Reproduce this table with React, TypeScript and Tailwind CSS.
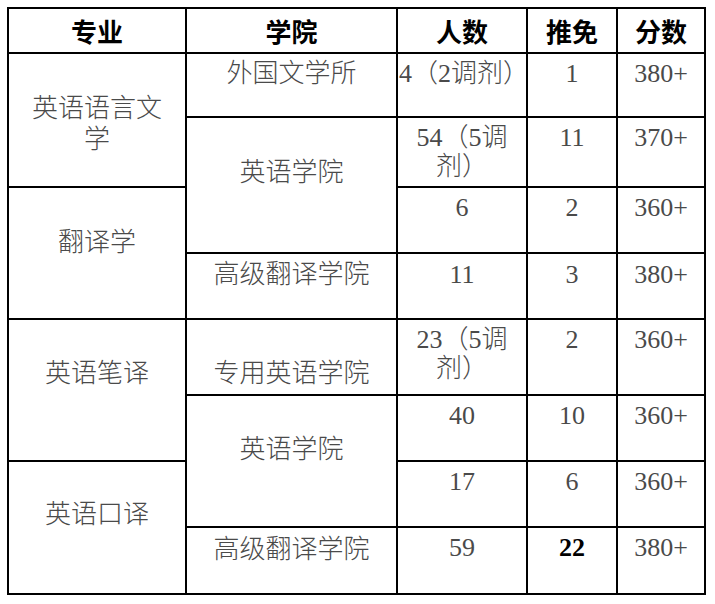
import { ReactNode } from 'react'

function Cell({ children, className = '' }: { children: ReactNode; className?: string }) {
  return (
    <div className={`bg-white flex justify-center text-center leading-[29px] ${className}`}>
      <div>{children}</div>
    </div>
  )
}

function Head({ children }: { children: ReactNode }) {
  return (
    <div className="bg-white flex items-center justify-center font-['Noto_Sans_CJK_SC',sans-serif] font-bold text-[26px] text-black">
      {children}
    </div>
  )
}

export default function App() {
  return (
    <div className="w-[715px] h-[604px] bg-white pt-[7px] pl-[7px]">
      <div className="inline-grid bg-black gap-[2px] p-[2px] grid-cols-[176px_209px_128px_88px_86px] grid-rows-[43px_62px_68px_64px_64px_74px_64px_64px_65px] font-['Liberation_Serif','Noto_Sans_CJK_SC',serif] font-light text-[26px] text-[#4a4a4a]">
        {/* header */}
        <Head>专业</Head>
        <Head>学院</Head>
        <Head>人数</Head>
        <Head>推免</Head>
        <Head>分数</Head>

        {/* 英语语言文学 */}
        <Cell className="row-span-2 pt-[39px] leading-[31px]">英语语言文<br />学</Cell>
        <Cell className="pt-[5px]">外国文学所</Cell>
        <Cell className="pt-[5px] justify-start! text-left whitespace-nowrap pl-[1px]">4（2调剂）</Cell>
        <Cell className="pt-[5px]">1</Cell>
        <Cell className="pt-[5px]">380+</Cell>

        <Cell className="row-span-2 pt-[40px]">英语学院</Cell>
        <Cell className="pt-[5px] px-[14px]">54（5调剂）</Cell>
        <Cell className="pt-[5px]">11</Cell>
        <Cell className="pt-[5px]">370+</Cell>

        {/* 翻译学 */}
        <Cell className="row-span-2 pt-[40px]">翻译学</Cell>
        <Cell className="pt-[5px]">6</Cell>
        <Cell className="pt-[5px]">2</Cell>
        <Cell className="pt-[5px]">360+</Cell>

        <Cell className="pt-[6px]">高级翻译学院</Cell>
        <Cell className="pt-[6px]">11</Cell>
        <Cell className="pt-[6px]">3</Cell>
        <Cell className="pt-[6px]">380+</Cell>

        {/* 英语笔译 */}
        <Cell className="row-span-2 pt-[39px]">英语笔译</Cell>
        <Cell className="pt-[39px]">专用英语学院</Cell>
        <Cell className="pt-[5px] px-[14px]">23（5调剂）</Cell>
        <Cell className="pt-[5px]">2</Cell>
        <Cell className="pt-[5px]">360+</Cell>

        <Cell className="row-span-2 pt-[39px]">英语学院</Cell>
        <Cell className="pt-[5px]">40</Cell>
        <Cell className="pt-[5px]">10</Cell>
        <Cell className="pt-[5px]">360+</Cell>

        {/* 英语口译 */}
        <Cell className="row-span-2 pt-[38px]">英语口译</Cell>
        <Cell className="pt-[5px]">17</Cell>
        <Cell className="pt-[5px]">6</Cell>
        <Cell className="pt-[5px]">360+</Cell>

        <Cell className="pt-[7px]">高级翻译学院</Cell>
        <Cell className="pt-[5px]">59</Cell>
        <Cell className="pt-[5px] font-bold text-black">22</Cell>
        <Cell className="pt-[5px]">380+</Cell>
      </div>
    </div>
  )
}
